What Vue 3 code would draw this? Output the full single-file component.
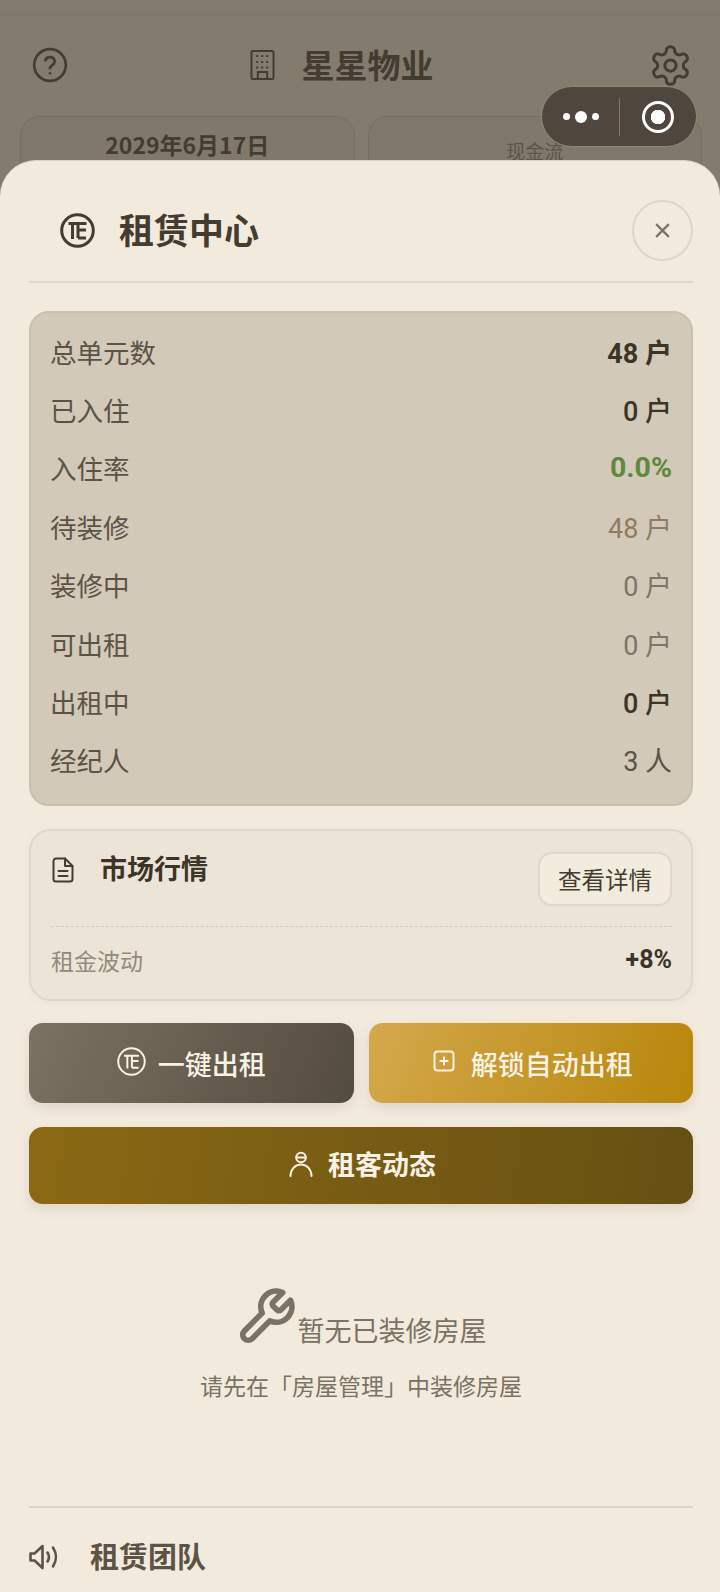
<script setup>
const stats = [
  { label: "总单元数", value: "48 户", kind: "strong" },
  { label: "已入住", value: "0 户", kind: "dark" },
  { label: "入住率", value: "0.0%", kind: "green" },
  { label: "待装修", value: "48 户", kind: "tan" },
  { label: "装修中", value: "0 户", kind: "muted" },
  { label: "可出租", value: "0 户", kind: "muted" },
  { label: "出租中", value: "0 户", kind: "dark" },
  { label: "经纪人", value: "3 人", kind: "plain" }
];
</script>

<template>
  <div class="page">
    <!-- page behind the sheet, dimmed -->
    <header class="topbar">
      <svg class="help" viewBox="0 0 24 24" fill="none" stroke="currentColor" stroke-width="1.700" stroke-linecap="round" stroke-linejoin="round">
        <circle cx="12" cy="12" r="10" />
        <path d="M9.090 9a3 3 0 0 1 5.830 1c0 2-3 2.600-3 4" />
        <path d="M12 17.200h.01" />
      </svg>
      <div class="brand">
        <svg class="building" viewBox="0 0 24 30" fill="none" stroke="currentColor" stroke-width="2">
          <rect x="1" y="1" width="22" height="28" rx="1.500" />
          <path d="M7.300 29v-7h9.400v7" />
          <path d="M5.700 6h12M5.700 12h12M5.700 17.500h12" stroke-dasharray="2 3" stroke-width="2" />
        </svg>
        <span class="brand-name">星星物业</span>
      </div>
      <svg class="gear" viewBox="0 0 24 24" fill="none" stroke="currentColor" stroke-width="1.600" stroke-linecap="round" stroke-linejoin="round">
        <path d="M12.220 2h-.44a2 2 0 0 0-2 2v.18a2 2 0 0 1-1 1.730l-.43.25a2 2 0 0 1-2 0l-.15-.08a2 2 0 0 0-2.730.73l-.22.38a2 2 0 0 0 .73 2.730l.15.1a2 2 0 0 1 1 1.720v.51a2 2 0 0 1-1 1.740l-.15.09a2 2 0 0 0-.73 2.730l.22.38a2 2 0 0 0 2.730.73l.15-.08a2 2 0 0 1 2 0l.43.25a2 2 0 0 1 1 1.730V20a2 2 0 0 0 2 2h.44a2 2 0 0 0 2-2v-.18a2 2 0 0 1 1-1.730l.43-.25a2 2 0 0 1 2 0l.15.08a2 2 0 0 0 2.730-.73l.22-.39a2 2 0 0 0-.73-2.730l-.15-.08a2 2 0 0 1-1-1.740v-.5a2 2 0 0 1 1-1.740l.15-.09a2 2 0 0 0 .73-2.730l-.22-.38a2 2 0 0 0-2.730-.73l-.15.08a2 2 0 0 1-2 0l-.43-.25a2 2 0 0 1-1-1.730V4a2 2 0 0 0-2-2z" />
        <circle cx="12" cy="12" r="3" />
      </svg>
    </header>
    <div class="behind-cards">
      <div class="behind-card date">2029年6月17日</div>
      <div class="behind-card cash">现金流</div>
    </div>

    <!-- wechat capsule -->
    <div class="capsule">
      <div class="capsule-dots"><i></i><i class="big"></i><i></i></div>
      <span class="capsule-line"></span>
      <div class="capsule-target"><i></i></div>
    </div>

    <section class="sheet">
      <div class="sheet-head">
        <svg class="rent-icon" viewBox="0 0 35 35" fill="none" stroke="currentColor" stroke-width="3">
          <circle cx="17.500" cy="17.500" r="15.800" />
          <path d="M8.500 10.500h18M12.500 10.500v15.500M18 17h8M18 25h8M18 10.500V25" />
        </svg>
        <h1>租赁中心</h1>
        <button class="close">
          <svg viewBox="0 0 16 16" fill="none" stroke="currentColor" stroke-width="2">
            <path d="M2 2l12 12M14 2L2 14" />
          </svg>
        </button>
      </div>

      <div class="stats">
        <div class="stat-row" v-for="s in stats" :key="s.label">
          <span class="stat-label">{{ s.label }}</span>
          <span class="stat-value" :class="s.kind">{{ s.value }}</span>
        </div>
      </div>

      <div class="market">
        <div class="market-head">
          <svg class="doc" viewBox="0 0 22 26" fill="none" stroke="currentColor" stroke-width="2" stroke-linejoin="round" stroke-linecap="round">
            <path d="M13 1.500H4a2.500 2.500 0 0 0-2.500 2.500v18A2.500 2.500 0 0 0 4 24.500h14a2.500 2.500 0 0 0 2.500-2.500V9z" />
            <path d="M13 1.500V9h7.500M6.500 14h9M6.500 19h9" />
          </svg>
          <span class="market-title">市场行情</span>
          <button class="detail">查看详情</button>
        </div>
        <div class="market-row">
          <span class="market-label">租金波动</span>
          <span class="market-value">+8%</span>
        </div>
      </div>

      <div class="actions">
        <button class="btn grey">
          <svg class="btn-icon" viewBox="0 0 35 35" fill="none" stroke="currentColor" stroke-width="2.400">
            <circle cx="17.500" cy="17.500" r="16" />
            <path d="M8.500 10.500h18M12.500 10.500v15.500M18 17h8M18 25h8M18 10.500V25" />
          </svg>
          一键出租
        </button>
        <button class="btn gold">
          <svg class="plus-icon" viewBox="0 0 22 22" fill="none" stroke="currentColor" stroke-width="2">
            <rect x="1.500" y="1.500" width="19" height="19" rx="3" />
            <path d="M11 6.500v9M6.500 11h9" />
          </svg>
          解锁自动出租
        </button>
      </div>
      <button class="btn tenant">
        <svg class="person" viewBox="0 0 24 26" fill="none" stroke="currentColor" stroke-width="2" stroke-linecap="round">
          <circle cx="12" cy="6.500" r="4.800" />
          <path d="M7.500 6.500h9" />
          <path d="M1.500 25c0-6.500 4.500-11.500 10.500-11.500s10.500 5 10.500 11.500" />
        </svg>
        租客动态
      </button>

      <div class="empty">
        <div class="empty-title">
          <svg class="wrench" viewBox="0 0 24 24" fill="none" stroke="currentColor" stroke-width="2.200" stroke-linecap="round" stroke-linejoin="round">
            <path d="M14.700 6.300a1 1 0 0 0 0 1.400l1.600 1.600a1 1 0 0 0 1.400 0l3.770-3.770a6 6 0 0 1-7.940 7.940l-6.910 6.910a2.120 2.120 0 0 1-3-3l6.910-6.910a6 6 0 0 1 7.940-7.940l-3.760 3.760z" />
          </svg>
          <span>暂无已装修房屋</span>
        </div>
        <p>请先在「房屋管理」中装修房屋</p>
      </div>

      <div class="team">
        <svg class="speaker" viewBox="0 0 29 26" fill="none" stroke="currentColor" stroke-width="2.600" stroke-linejoin="round" stroke-linecap="round">
          <path d="M1.500 9.500v7h4l8 7.500V2l-8 7.500z" />
          <path d="M18.500 8.500c1.800 2.800 1.800 6.200 0 9" />
          <path d="M24 3.500c3.800 5.800 3.800 13.200 0 19" />
        </svg>
        <span>租赁团队</span>
      </div>
    </section>
  </div>
</template>

<style scoped>
.page {
  position: relative;
  width: 720px;
  height: 1592px;
  overflow: hidden;
  background: linear-gradient(#827b6e 0 11px, #7f7769 14px, #827b6e 18px);
  color: #453c31;
  font-family: "Noto Sans CJK SC", "Noto Sans", sans-serif;
}

/* Behind the sheet */
.topbar {
  display: flex;
  align-items: center;
  justify-content: space-between;
  height: 50px;
  padding: 40px 27px 0 31px;
}
.help {
  width: 38px;
  height: 38px;
}
.gear {
  width: 45px;
  height: 45px;
}
.brand {
  display: flex;
  align-items: center;
  gap: 27px;
  margin-right: 34px;
}
.building {
  width: 25px;
  height: 30px;
}
.brand-name {
  margin-top: -3px;
  font-size: 33px;
  font-weight: 700;
  line-height: 44px;
}
.behind-cards {
  display: flex;
  gap: 13px;
  padding: 26px 18px 0 20px;
}
.behind-card {
  flex: 1;
  height: 110px;
  border: 1px solid #777062;
  border-radius: 20px;
  text-align: center;
  background: #7f786b;
}
.date {
  padding-top: 10px;
  font-size: 23px;
  font-weight: 700;
  line-height: 34px;
}
.cash {
  padding-top: 20px;
  font-size: 19px;
  line-height: 28px;
  color: #5c5447;
}

/* Capsule */
.capsule {
  position: absolute;
  top: 86px;
  left: 541px;
  width: 156px;
  height: 61px;
  display: flex;
  align-items: center;
  box-sizing: border-box;
  border: 1px solid #8f897c;
  border-radius: 31px;
  background: #4f473e;
}
.capsule-dots {
  display: flex;
  align-items: center;
  justify-content: center;
  gap: 5px;
  width: 77px;
}
.capsule-dots i {
  width: 7px;
  height: 7px;
  border-radius: 50%;
  background: #fff;
}
.capsule-dots .big {
  width: 12px;
  height: 12px;
}
.capsule-line {
  width: 1px;
  height: 38px;
  background: #7d766a;
}
.capsule-target {
  flex: 1;
  display: flex;
  align-items: center;
  justify-content: center;
}
.capsule-target i {
  box-sizing: border-box;
  width: 32px;
  height: 32px;
  border: 3px solid #fff;
  border-radius: 50%;
  background: radial-gradient(circle, #fff 0 7px, transparent 7.500px);
}

/* Sheet */
.sheet {
  position: absolute;
  top: 160px;
  left: 0;
  right: 0;
  bottom: 0;
  padding: 0 27px 0 29px;
  border-top: 1px solid #d9d1c2;
  border-radius: 36px 36px 0 0;
  background: #f2eadd;
}
.sheet-head {
  display: flex;
  align-items: center;
  height: 102px;
  padding: 18px 0 0 31px;
  border-bottom: 2px solid #dcd5c8;
}
.rent-icon {
  width: 35px;
  height: 35px;
  color: #453c31;
}
.sheet-head h1 {
  margin: 0 0 3px 24px;
  font-size: 35px;
  font-weight: 700;
  line-height: 48px;
  color: #453c31;
}
.close {
  display: flex;
  align-items: center;
  justify-content: center;
  width: 61px;
  height: 61px;
  margin-left: auto;
  padding: 0;
  border: 2px solid #dcd5c8;
  border-radius: 50%;
  background: transparent;
  color: #7a7265;
}
.close svg {
  width: 17px;
  height: 17px;
}

/* Stats */
.stats {
  margin-top: 28px;
  padding: 9px 19px 15px 19px;
  border: 2px solid #c8bfae;
  border-radius: 20px;
  background: #d2c9b8;
}
.stat-row {
  display: flex;
  align-items: center;
  justify-content: space-between;
  height: 58.400px;
}
.stat-label {
  font-size: 26.500px;
  color: #5c5346;
}
.stat-value {
  font-family: Roboto, "Noto Sans CJK SC", sans-serif;
  font-size: 27px;
}
.strong {
  font-weight: 700;
  color: #3d3429;
}
.dark {
  font-weight: 500;
  color: #3d3429;
}
.green {
  font-size: 28.500px;
  font-weight: 700;
  color: #5f8a3c;
}
.tan {
  color: #8e7b62;
}
.muted {
  color: #7d7568;
}
.plain {
  color: #5c5346;
}

/* Market */
.market {
  margin-top: 23px;
  padding: 21px 19px 0 20px;
  height: 172px;
  box-sizing: border-box;
  border: 2px solid #dfd7c9;
  border-radius: 22px;
  background: #ebe4d7;
  box-shadow: 0 2px 8px rgba(90, 70, 40, 0.05);
}
.market-head {
  display: flex;
  align-items: flex-start;
  height: 74px;
  border-bottom: 1px dashed #d2cabb;
}
.doc {
  width: 22px;
  height: 26px;
  margin: 5px 0 0 1px;
}
.market-title {
  margin: -2px 0 0 26px;
  font-size: 27px;
  font-weight: 700;
  line-height: 36px;
  color: #3d3429;
}
.detail {
  width: 134px;
  height: 54px;
  margin-left: auto;
  padding: 0;
  border: 2px solid #dfd7c9;
  border-radius: 14px;
  background: #f2ecdf;
  color: #453c31;
  font-family: inherit;
  font-size: 23.500px;
}
.market-row {
  display: flex;
  align-items: center;
  justify-content: space-between;
  height: 65px;
}
.market-label {
  font-size: 23px;
  color: #928a7c;
}
.market-value {
  font-family: Roboto, sans-serif;
  font-size: 25px;
  font-weight: 700;
  color: #3d3429;
}

/* Buttons */
.actions {
  display: grid;
  grid-template-columns: 1fr 1fr;
  gap: 15px;
  margin-top: 22px;
}
.btn {
  display: flex;
  align-items: center;
  justify-content: center;
  height: 80px;
  padding: 0;
  border: none;
  border-radius: 14px;
  color: #f8f1e4;
  font-family: inherit;
  font-size: 27px;
  font-weight: 500;
  box-shadow: 0 5px 12px rgba(90, 70, 40, 0.12);
}
.grey {
  background: linear-gradient(110deg, #7c7263, #544b3f);
}
.gold {
  padding-left: 4px;
  background: linear-gradient(110deg, #d4a84c, #b8860b);
}
.tenant {
  width: 100%;
  height: 77px;
  margin-top: 24px;
  padding: 0 0 4px 3px;
  font-weight: 700;
  background: linear-gradient(100deg, #8b6914, #654f12);
}
.btn-icon {
  width: 29px;
  height: 29px;
  margin: -4px 12px 0 0;
}
.plus-icon {
  width: 22px;
  height: 22px;
  margin: -4px 16px 0 0;
}
.person {
  width: 24px;
  height: 26px;
  margin-right: 15px;
}

/* Empty state */
.empty {
  margin-top: 82px;
  text-align: center;
  color: #7a7265;
}
.empty-title {
  display: flex;
  align-items: flex-end;
  justify-content: center;
  margin-left: -1px;
  font-size: 27px;
  line-height: 40px;
}
.wrench {
  width: 62px;
  height: 62px;
  margin-right: 1px;
  margin-bottom: 2px;
}
.empty p {
  margin: 18px 0 0;
  font-size: 23px;
  line-height: 34px;
}

/* Footer */
.team {
  display: flex;
  align-items: center;
  margin-top: 104px;
  height: 90px;
  padding-top: 2px;
  border-top: 2px solid #dcd5c8;
  color: #5c5346;
}
.speaker {
  width: 29px;
  height: 26px;
  margin-top: 4px;
}
.team span {
  margin-left: 32px;
  font-size: 29px;
  font-weight: 700;
}
</style>
